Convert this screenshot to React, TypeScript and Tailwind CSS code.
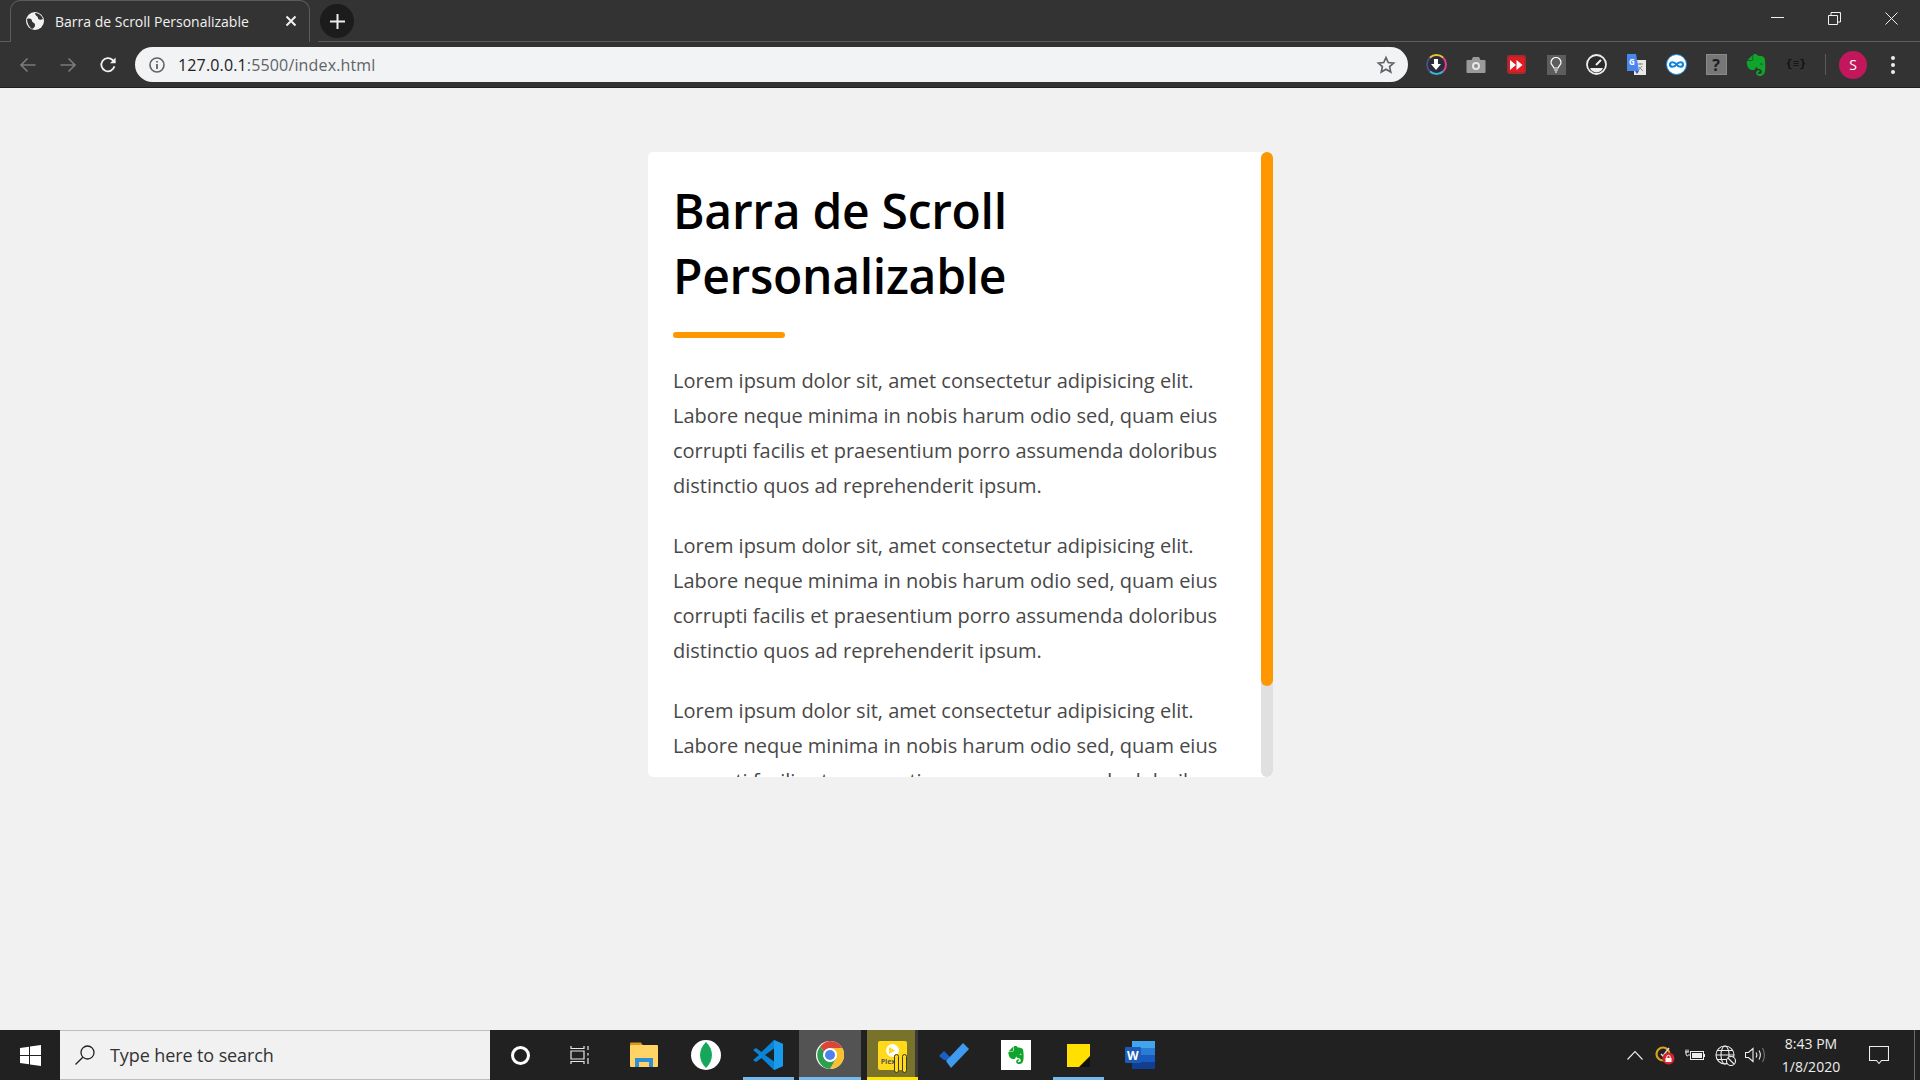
import React from "react";
import { SiEvernote } from "react-icons/si";

const para =
  "Lorem ipsum dolor sit, amet consectetur adipisicing elit. Labore neque minima in nobis harum odio sed, quam eius corrupti facilis et praesentium porro assumenda doloribus distinctio quos ad reprehenderit ipsum.";

function ChromeLogo({ size = 34 }: { size?: number }) {
  return (
    <svg width={size} height={size} viewBox="0 0 24 24">
      <circle cx="12" cy="12" r="12" fill="#fff" />
      <path d="M12 0A12 12 0 0 1 22.4 6H12a6 6 0 0 0-5.2 3L3.6 4.8A12 12 0 0 1 12 0z" fill="#db4437" />
      <path d="M22.4 6A12 12 0 0 1 12 24l5.2-9A6 6 0 0 0 12 6z" fill="#fbc02d" />
      <path d="M3.6 4.8A12 12 0 0 0 12 24l5.2-9a6 6 0 0 1-10.4-6z" fill="#2e9e4f" />
      <circle cx="12" cy="12" r="5.4" fill="#fff" />
      <circle cx="12" cy="12" r="4.3" fill="#4e80ee" />
    </svg>
  );
}

function Toolbar() {
  return (
    <div className="flex h-[46px] items-center bg-[#333333] border-b border-[#1f1f1f]">
      <div className="flex w-[55px] shrink-0 justify-center">
        <svg width="18" height="18" viewBox="0 0 18 18" fill="none" stroke="#7b7b7b" strokeWidth="1.7">
          <path d="M16.5 9H2M8.5 2.5 2 9l6.5 6.5" />
        </svg>
      </div>
      <div className="flex w-[26px] shrink-0 justify-center">
        <svg width="18" height="18" viewBox="0 0 18 18" fill="none" stroke="#7b7b7b" strokeWidth="1.7">
          <path d="M1.5 9H16M9.5 2.5 16 9l-6.5 6.5" />
        </svg>
      </div>
      <div className="flex w-[54px] shrink-0 justify-center">
        <svg width="18" height="18" viewBox="0 0 18 18" fill="none" stroke="#f1f1f1" strokeWidth="1.8">
          <path d="M15.4 10.2A6.6 6.6 0 1 1 13.6 4L16 6.2" />
          <path d="M16.6 1.6v5.6H11" fill="#f1f1f1" stroke="none" />
        </svg>
      </div>
      <div className="flex h-[35px] w-[1273px] shrink-0 items-center rounded-full bg-[#f1f3f4] pl-[13px] pr-[12px]">
        <svg width="18" height="18" viewBox="0 0 18 18" fill="none" stroke="#5f6368" strokeWidth="1.6" className="shrink-0">
          <circle cx="9" cy="9" r="7" />
          <path d="M9 8v5M9 5v1.6" strokeWidth="1.8" />
        </svg>
        <span className="ml-[12px] text-[16px] tracking-[0.15px] font-['Open_Sans',sans-serif] text-[#5f6368]">
          <span className="text-[#202124]">127.0.0.1</span>:5500/index.html
        </span>
        <svg width="20" height="20" viewBox="0 0 24 24" fill="none" stroke="#5f6368" strokeWidth="2" className="ml-auto shrink-0">
          <path d="m12 3 2.7 6 6.5.7-4.9 4.3 1.4 6.4L12 17l-5.7 3.4 1.4-6.4-4.9-4.3L9.300 9z" />
        </svg>
      </div>
      <div className="ml-[8px] flex items-center">
        <div className="flex w-[40px] justify-center">
          <div className="flex h-[21px] w-[21px] items-center justify-center rounded-full border-2 border-[#4b4f7a] border-t-[#e8c13a] border-r-[#e0418f] border-b-[#35b6d8] bg-[#2b2b3a]">
            <svg width="12" height="12" viewBox="0 0 12 12"><path d="M4 0h4v5h3L6 11 1 5h3z" fill="#fff" /></svg>
          </div>
        </div>
        <div className="flex w-[40px] justify-center">
          <svg width="20" height="18" viewBox="0 0 20 18">
            <path d="M1.500 4h4l1.500-3h6l1.500 3h4a1 1 0 0 1 1 1v11a1 1 0 0 1-1 1h-17a1 1 0 0 1-1-1V5a1 1 0 0 1 1-1z" fill="#9a9a9a" />
            <circle cx="10" cy="10" r="4" fill="#e6e6e6" />
            <circle cx="10" cy="10" r="2" fill="#8f8f8f" />
          </svg>
        </div>
        <div className="flex w-[40px] justify-center">
          <div className="flex h-[19px] w-[19px] items-center justify-center rounded-[3px] border-2 border-[#a92a2a] bg-[#e01b24]">
            <svg width="13" height="10" viewBox="0 0 13 10"><path d="M0 0l6 5-6 5zM6.500 0l6 5-6 5z" fill="#fff" /></svg>
          </div>
        </div>
        <div className="flex w-[40px] justify-center">
          <div className="flex h-[20px] w-[19px] items-center justify-center bg-[#5d5d5d]">
            <svg width="12" height="16" viewBox="0 0 12 16" fill="none" stroke="#fff" strokeWidth="1.2">
              <path d="M3.800 11C3.500 9 1 8 1 5.500a5 5 0 0 1 10 0C11 8 8.500 9 8.200 11zM4 13h4M5 15h2" />
            </svg>
          </div>
        </div>
        <div className="flex w-[40px] justify-center">
          <svg width="21" height="21" viewBox="0 0 21 21">
            <circle cx="10.500" cy="10.500" r="9.500" fill="#2a2a2a" stroke="#ededed" strokeWidth="1.800" />
            <path d="M4 14a7 7 0 0 0 13 0z" fill="#ededed" />
            <path d="m10 11 5-5" stroke="#ededed" strokeWidth="2" />
          </svg>
        </div>
        <div className="flex w-[40px] justify-center">
          <svg width="21" height="22" viewBox="0 0 21 22">
            <rect x="8" y="6" width="12" height="15" fill="#e8e8e8" />
            <path d="M11 10h6M14 9v2M12 17l4-5M13 13l4 4" stroke="#8a8a8a" strokeWidth="1" fill="none" />
            <path d="M1 0h9l3 17H1z" fill="#4a86f0" />
            <path d="M9 17h4l-2 3z" fill="#2f5db8" />
            <text x="3" y="11" fontSize="8" fontWeight="700" fill="#fff" fontFamily="Open Sans, sans-serif">G</text>
          </svg>
        </div>
        <div className="flex w-[40px] justify-center">
          <svg width="21" height="21" viewBox="0 0 21 21">
            <circle cx="10.500" cy="10.500" r="10" fill="#fff" stroke="#0f8be6" strokeWidth="1" />
            <path d="M10.500 10.500c-2-3-6.500-3-6.500 0s4.500 3 6.500 0 6.500-3 6.500 0-4.500 3-6.500 0z" fill="none" stroke="#0f86dd" strokeWidth="2.200" />
          </svg>
        </div>
        <div className="flex w-[40px] justify-center">
          <div className="flex h-[21px] w-[21px] items-center justify-center border border-[#8a8a8a] bg-[#777777] text-[16px] leading-none font-bold text-[#1d1d1d] font-['Open_Sans',sans-serif]">?</div>
        </div>
        <div className="flex w-[40px] justify-center">
          <SiEvernote size={22} color="#0fa52c" />
        </div>
        <div className="flex w-[40px] justify-center">
          <span className="text-[11px] leading-none font-bold text-[#111111] font-['Liberation_Mono',monospace]">{"{≡}"}</span>
        </div>
        <div className="ml-[9px] h-[21px] w-px bg-[#5a5a5a]" />
        <div className="ml-[13px] flex h-[28px] w-[28px] items-center justify-center rounded-full bg-[#c2185b] text-[14px] text-white font-['Open_Sans',sans-serif]">S</div>
        <div className="ml-[24px] flex flex-col gap-[3px]">
          <div className="h-[4px] w-[4px] rounded-full bg-[#eeeeee]" />
          <div className="h-[4px] w-[4px] rounded-full bg-[#eeeeee]" />
          <div className="h-[4px] w-[4px] rounded-full bg-[#eeeeee]" />
        </div>
      </div>
    </div>
  );
}

function TabStrip() {
  return (
    <div className="flex h-[42px] bg-[#333333]">
      <div className="mt-auto h-px w-[10px] bg-[#5c5c5c]" />
      <div className="flex h-[42px] w-[300px] shrink-0 items-center rounded-t-[10px] border border-b-0 border-[#5c5c5c] bg-[#333333] pb-[1px] pl-[15px] pr-[12px]">
        <svg width="18" height="18" viewBox="0 0 18 18" className="shrink-0">
          <circle cx="9" cy="9" r="9" fill="#f1f1f1" />
          <path d="M1 7c3-1 5 0 5 2s3 1 3 4-2 3-3 4C3 15 1 11 1 7zM9 1c0 3 3 3 3 5s3 2 5 1c-1-3-4-6-8-6z" fill="#333333" />
        </svg>
        <span className="ml-[11px] text-[14px] text-[#f1f1f1] font-['Open_Sans',sans-serif]">Barra de Scroll Personalizable</span>
        <svg width="12" height="12" viewBox="0 0 12 12" stroke="#f1f1f1" strokeWidth="2" className="ml-auto shrink-0">
          <path d="M1.500 1.500l9 9M10.500 1.500l-9 9" />
        </svg>
      </div>
      <div className="relative flex-1">
        <div className="absolute bottom-0 left-[8px] right-0 h-px bg-[#5c5c5c]" />
        <div className="ml-[10px] mt-[4px] flex h-[34px] w-[34px] items-center justify-center rounded-full bg-[#1c1c1c]">
          <svg width="15" height="15" viewBox="0 0 15 15" stroke="#eeeeee" strokeWidth="2"><path d="M7.500 0v15M0 7.500h15" /></svg>
        </div>
        <div className="absolute right-[22px] top-[12px] flex items-start">
          <svg width="13" height="12" viewBox="0 0 13 12" stroke="#f0f0f0" strokeWidth="1" className="mr-[44px]"><path d="M0 5.500h13" /></svg>
          <svg width="13" height="13" viewBox="0 0 13 13" fill="none" stroke="#f0f0f0" strokeWidth="1" className="mr-[44px]">
            <path d="M.5 3.500h9v9h-9zM3 3.500V.5h9.500V10H9.500" />
          </svg>
          <svg width="13" height="13" viewBox="0 0 13 13" stroke="#f0f0f0" strokeWidth="1"><path d="M.5.5l12 12M12.500.5l-12 12" /></svg>
        </div>
      </div>
    </div>
  );
}

function Card() {
  return (
    <div className="ml-[648px] mt-[64px] flex h-[625px] w-[625px] overflow-hidden rounded-[5px] bg-white font-['Open_Sans',sans-serif]">
      <div className="min-w-0 flex-1 overflow-hidden pl-[25px] pr-[23px] pt-[26px]">
        <h1 className="text-[48px] leading-[65px] font-semibold tracking-[-0.3px] text-black">Barra de Scroll Personalizable</h1>
        <div className="mb-[25px] mt-[24px] h-[6px] w-[112px] rounded-[3px] bg-[#ff9800]" />
        {[0, 1, 2].map((i) => (
          <p key={i} className="mb-[25px] text-[20px] leading-[35px] text-[#484848]">{para}</p>
        ))}
      </div>
      <div className="h-full w-3 shrink-0 rounded-md bg-[#e0e0e0]">
        <div className="h-[534px] w-full rounded-md bg-[#ff9800]" />
      </div>
    </div>
  );
}

function Taskbar() {
  return (
    <div className="flex h-[50px] shrink-0 items-stretch bg-[#212121]">
      <div className="flex w-[60px] items-center justify-center">
        <svg width="21" height="21" viewBox="0 0 21 21" fill="#fff">
          <path d="M0 3l9-1.300v8.300H0zM10 1.500 21 0v10H10zM0 11h9v8.300L0 18zM10 11h11v10l-11-1.500z" />
        </svg>
      </div>
      <div className="flex w-[430px] items-center border border-[#bdbdbd] border-x-0 bg-[#f1f1f1] pl-[14px]">
        <svg width="22" height="22" viewBox="0 0 22 22" fill="none" stroke="#222222" strokeWidth="1.300">
          <circle cx="13.500" cy="8.500" r="6.500" />
          <path d="M8.800 13.200 1.500 20.500" />
        </svg>
        <span className="ml-[14px] text-[18px] text-[#333333] font-['Open_Sans',sans-serif] tracking-[-0.1px]">Type here to search</span>
      </div>
      <div className="flex w-[60px] items-center justify-center">
        <div className="h-[19px] w-[19px] rounded-full border-[3px] border-white" />
      </div>
      <div className="flex w-[63px] items-center justify-center pr-[3px]">
        <svg width="20" height="20" viewBox="0 0 20 20" fill="none" stroke="#e8e8e8" strokeWidth="1.200">
          <path d="M1 1v2.500h13V1M1 6h13v8H1zM1 19v-2.500h13V19M18 1v4M18 8v2.500M18 13v6" />
        </svg>
      </div>
      <div className="flex w-[62px] items-center justify-center">
        <svg width="28" height="26" viewBox="0 0 28 26">
          <path d="M0 1.500a1 1 0 0 1 1-1h10l2 3H0z" fill="#d99a1c" />
          <rect x="0" y="3" width="28" height="22" rx="1" fill="#ffd465" />
          <path d="M5 25v-9h18v9h-4v-5H9v5z" fill="#2f8fd8" />
        </svg>
      </div>
      <div className="flex w-[62px] items-center justify-center">
        <div className="flex h-[30px] w-[30px] items-center justify-center rounded-full bg-white">
          <svg width="14" height="26" viewBox="0 0 14 26"><path d="M7 0c8 8 8 18 0 26C-1 18-1 8 7 0z" fill="#15a85a" /></svg>
        </div>
      </div>
      <div className="relative flex w-[62px] items-center justify-center">
        <svg width="30" height="30" viewBox="0 0 30 30">
          <path d="M21 0 8.500 12 3 8 0 10l6 5-6 5 3 2 5.500-4L21 30l9-4V4z" fill="#0a84d6" />
          <path d="M21 0l9 4v22l-9 4z" fill="#1a9bea" />
          <path d="M21 8.500 12 15l9 6.500z" fill="#212121" />
        </svg>
        <div className="absolute bottom-0 left-[6px] h-[3px] w-[51px] bg-[#76b9ed]" />
      </div>
      <div className="relative flex w-[62px] items-center justify-center bg-[#535353]">
        <ChromeLogo size={28} />
        <div className="absolute bottom-0 left-0 h-[3px] w-full bg-[#76b9ed]" />
      </div>
      <div className="relative flex w-[62px] items-center justify-center">
        <div className="absolute bottom-0 left-[6px] top-0 w-[48px] bg-[#78722a]" />
        <div className="absolute bottom-0 left-[54px] top-0 w-[3px] bg-[#3a3a3a]" />
        <div className="absolute bottom-0 left-[6px] h-[3px] w-[51px] bg-[#ffe600]" />
        <div className="relative flex h-[29px] w-[29px] flex-col items-center rounded-[2px] bg-[#ffd91a] pt-[3px]">
          <div className="flex h-[13px] w-[13px] items-center justify-center rounded-full bg-white">
            <svg width="6" height="7" viewBox="0 0 6 7"><path d="M0 0l6 3.500L0 7z" fill="#ffd91a" /></svg>
          </div>
          <span className="text-[7px] leading-[9px] font-bold text-[#555555] font-['Open_Sans',sans-serif] mr-[8px]">Plex</span>
          <div className="absolute -bottom-[3px] right-0 flex gap-[3px]">
            <div className="h-[19px] w-[5px] rounded-sm border border-[#3a3a20] bg-[#ffd91a]" />
            <div className="h-[19px] w-[5px] rounded-sm border border-[#3a3a20] bg-[#ffd91a]" />
          </div>
        </div>
      </div>
      <div className="flex w-[62px] items-center justify-center">
        <svg width="30" height="26" viewBox="0 0 30 26">
          <path d="M0 14l5-5 6 6-3 3-3 0z" fill="#1b5fc4" />
          <path d="M7 19 24 1l6 6L12 26z" fill="#3f9bf0" />
        </svg>
      </div>
      <div className="flex w-[62px] items-center justify-center">
        <div className="flex h-[30px] w-[30px] items-center justify-center bg-white">
          <SiEvernote size={18} color="#0fa52c" />
        </div>
      </div>
      <div className="relative flex w-[62px] items-center justify-center">
        <svg width="23" height="23" viewBox="0 0 23 23">
          <rect width="23" height="23" fill="#ffe000" />
          <path d="M23 12v11H12z" fill="#111111" />
        </svg>
        <div className="absolute bottom-0 left-[6px] h-[3px] w-[51px] bg-[#76b9ed]" />
      </div>
      <div className="flex w-[62px] items-center justify-center">
        <svg width="30" height="28" viewBox="0 0 30 28">
          <rect x="7" y="0" width="23" height="7" fill="#41a5ee" />
          <rect x="7" y="7" width="23" height="7" fill="#2b7cd3" />
          <rect x="7" y="14" width="23" height="7" fill="#185abd" />
          <rect x="7" y="21" width="23" height="7" fill="#103f91" />
          <rect x="0" y="6" width="16" height="16" rx="1" fill="#1a5cb8" />
          <text x="2" y="19" fontSize="12" fontWeight="700" fill="#fff" fontFamily="Open Sans, sans-serif">W</text>
        </svg>
      </div>
      <div className="ml-auto flex items-center pr-[5px]">
        <div className="flex w-[30px] justify-center">
          <svg width="16" height="10" viewBox="0 0 16 10" fill="none" stroke="#eeeeee" strokeWidth="1.100"><path d="M.5 9.500 8 1.500l7.500 8" /></svg>
        </div>
        <div className="flex w-[30px] justify-center">
          <svg width="20" height="20" viewBox="0 0 20 20">
            <circle cx="8" cy="9" r="6.500" fill="none" stroke="#d9a21a" strokeWidth="2.200" />
            <path d="m6 9 2 2 6-8" fill="none" stroke="#dddddd" strokeWidth="1.500" />
            <circle cx="13.500" cy="13.500" r="6" fill="#d9242a" />
            <rect x="10.500" y="13" width="6" height="4" fill="#fff" />
            <path d="M11.800 13v-1a1.700 1.700 0 0 1 3.400 0v1" fill="none" stroke="#fff" />
          </svg>
        </div>
        <div className="flex w-[30px] justify-center">
          <svg width="20" height="12" viewBox="0 0 20 12" fill="none" stroke="#eeeeee">
            <rect x="5.500" y="2.500" width="13" height="8" fill="#212121" />
            <rect x="7" y="4" width="10" height="5" fill="#eeeeee" stroke="none" />
            <path d="M19.500 5v3M5 6H3M1 3v2a2 2 0 0 0 2 2M3 3V.5M1 3V.5M0 3h4" />
          </svg>
        </div>
        <div className="flex w-[30px] justify-center">
          <svg width="21" height="21" viewBox="0 0 21 21" fill="none" stroke="#eeeeee" strokeWidth="1.100">
            <circle cx="10" cy="10" r="9" />
            <ellipse cx="10" cy="10" rx="4" ry="9" />
            <path d="M1 10h18M2 5.500h16M2 14.500h16" />
            <circle cx="16" cy="16" r="4.500" fill="#212121" />
            <path d="m13 13 6 6" />
          </svg>
        </div>
        <div className="flex w-[30px] justify-center">
          <svg width="20" height="16" viewBox="0 0 20 16" fill="none" stroke="#eeeeee" strokeWidth="1.100">
            <path d="M.5 5.500h3L8 1.500v13l-4.500-4h-3zM11 5.500c1 1.500 1 3.500 0 5M14 3.500c1.800 3 1.800 6 0 9" />
            <path d="M17.500 1c2.500 4 2.500 10 0 14" stroke="#777777" />
          </svg>
        </div>
        <div className="ml-[3px] flex w-[76px] flex-col items-center text-[14px] leading-[23px] text-[#eeeeee] font-['Open_Sans',sans-serif]">
          <span>8:43 PM</span>
          <span>1/8/2020</span>
        </div>
        <div className="ml-[9px] flex w-[42px] justify-center">
          <svg width="20" height="19" viewBox="0 0 20 19" fill="none" stroke="#eeeeee" strokeWidth="1.100"><path d="M.5.500h19v14h-7L10 17.500 7.500 14.500h-7z" /></svg>
        </div>
        <div className="ml-[14px] h-full w-px bg-[#6b6b6b]" />
      </div>
    </div>
  );
}

export default function App() {
  return (
    <div className="flex h-screen w-full flex-col overflow-hidden bg-[#f1f1f1]">
      <TabStrip />
      <Toolbar />
      <div className="flex-1 min-h-0">
        <Card />
      </div>
      <Taskbar />
    </div>
  );
}
